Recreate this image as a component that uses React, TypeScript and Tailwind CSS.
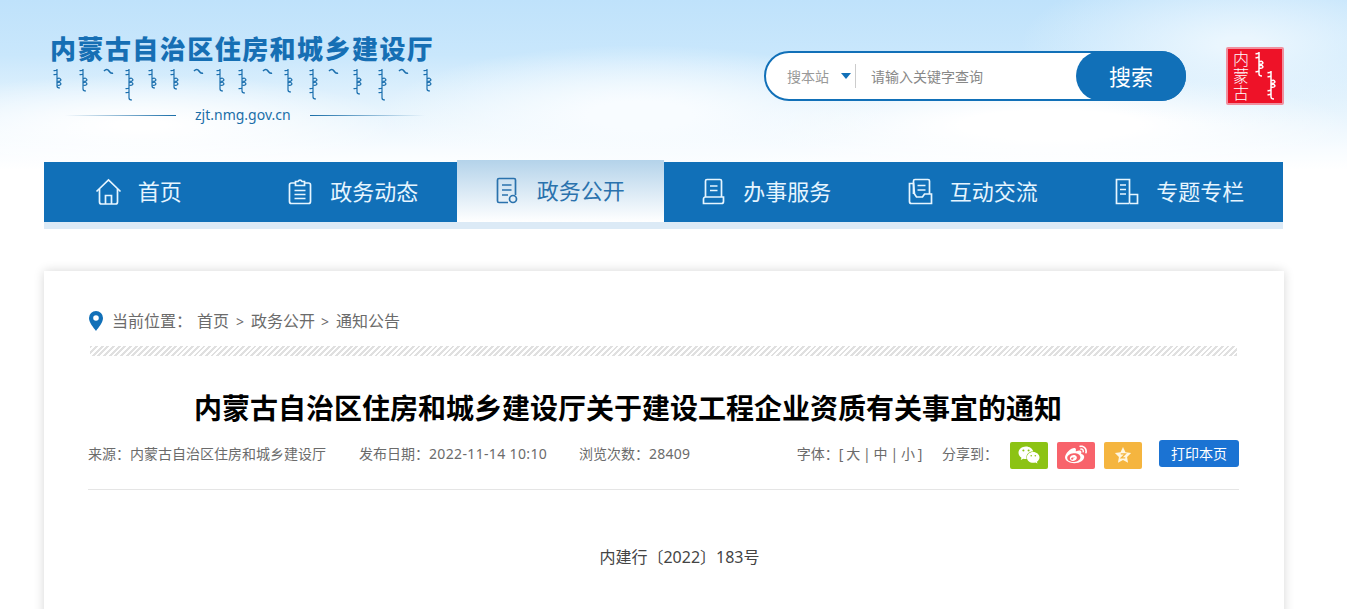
import { ReactNode } from 'react';
import { FaWeixin, FaWeibo } from 'react-icons/fa';

// [x, height] of each column of the script line under the site name
const scriptCols = [
  [7, 19], [33, 22], [58, 8], [79, 31], [102, 19], [124, 20], [148, 4], [170, 22], [192, 24],
  [217, 5], [238, 23], [263, 30], [283, 6], [307, 25], [332, 31], [353, 6], [377, 22],
];

function stemPath(x: number, y: number, h: number) {
  let d = `M${x} ${y}V${y + h - 2}q0 2 3 2`;
  let i = 1;
  while (i < h - 4) {
    if (i % 2 === 0) {
      d += `M${x} ${y + i}q3 -2 4 1q-1 2 -4 1`;
    } else {
      d += `M${x} ${y + i}q-2 1 -3.500 .5`;
    }
    i += 3 + (i % 3);
  }
  return d;
}

function ScriptLine() {
  return (
    <svg width="400" height="34" viewBox="0 0 400 34" className="block">
      {scriptCols.map(([x, h]) =>
        h < 10 ? (
          <path key={x} d={`M${x - 4} 3q3 -3 5 0t4 2`} fill="none" stroke="#1b6fae" strokeWidth="1.6" />
        ) : (
          <path key={x} d={stemPath(x, 1, h)} fill="none" stroke="#1b6fae" strokeWidth="1.2" />
        ),
      )}
    </svg>
  );
}

function Stamp() {
  return (
    <div className="flex h-[58px] w-[58px] items-center justify-between rounded-[2px] border-2 border-[#f0909f] bg-[#ee1228] pl-[3px] pr-[3px]">
      <span className="h-[54px] whitespace-nowrap text-center text-[16px] font-light leading-[18px] tracking-[1px] text-white [writing-mode:vertical-rl]">内蒙古</span>
      <svg width="28" height="50" viewBox="0 0 28 50">
        <path d={stemPath(8, 1, 24)} fill="none" stroke="#fff" strokeWidth="1.500" />
        <path d={stemPath(20, 20, 28)} fill="none" stroke="#fff" strokeWidth="1.500" />
      </svg>
    </div>
  );
}

const navIcon = 'fill-none stroke-current stroke-[1.7]';

function HomeIcon() {
  return (
    <svg width="27" height="27" viewBox="0 0 27 27" className={navIcon}>
      <path d="M1.5 13.5 13.500 2l12 11.500" />
      <path d="M4.500 11v13a2 2 0 0 0 2 2h14a2 2 0 0 0 2-2V11" />
      <path d="M10.500 26v-8.500h6V26" />
    </svg>
  );
}

function ClipboardIcon() {
  return (
    <svg width="27" height="27" viewBox="0 0 27 27" className={navIcon}>
      <path d="M8 5H4.500a2 2 0 0 0-2 2v16.500a2 2 0 0 0 2 2h17a2 2 0 0 0 2-2V7a2 2 0 0 0-2-2H18" />
      <path d="M8.500 7.500V3.500h2.500a2.200 2.200 0 0 1 4 0h2.500v4z" />
      <path d="M7.500 12.500h11M7.500 16.500h11M7.500 20.500h11" />
    </svg>
  );
}

function DocCircleIcon() {
  return (
    <svg width="27" height="27" viewBox="0 0 27 27" className={navIcon}>
      <path d="M14 25.500H5a1.500 1.500 0 0 1-1.500-1.500V3a1.500 1.500 0 0 1 1.500-1.500h15A1.500 1.500 0 0 1 21.500 3v15" />
      <path d="M8 8h9.500M8 13h9.500M8 18h6" />
      <circle cx="19" cy="22" r="3.500" />
    </svg>
  );
}

function ScrollIcon() {
  return (
    <svg width="27" height="27" viewBox="0 0 27 27" className={navIcon}>
      <path d="M5.500 19V3a1.500 1.500 0 0 1 1.500-1.500h13A1.500 1.500 0 0 1 21.500 3v16" />
      <path d="M10 8h7.500M10 12.500h7.500" />
      <path d="M3.500 25.500V21a2 2 0 0 1 2-2h18v4.500a2 2 0 0 1-2 2z" />
    </svg>
  );
}

function TrayIcon() {
  return (
    <svg width="27" height="27" viewBox="0 0 27 27" className={navIcon}>
      <path d="M6.500 16V3a1.500 1.500 0 0 1 1.500-1.500h13A1.500 1.500 0 0 1 22.500 3v13" />
      <path d="M10.500 7.500h8M10.500 12h8" />
      <path d="M6.500 5.500H2.500v18a2 2 0 0 0 2 2h20V16h-7l-2 3h-6l-2-3z" />
    </svg>
  );
}

function BuildingIcon() {
  return (
    <svg width="27" height="27" viewBox="0 0 27 27" className={navIcon}>
      <path d="M16.500 25.500H3.500V1.500h13V25.500" />
      <path d="M7 7h6M7 11.500h6M7 16h6" />
      <path d="M17 16.500h7.500v9H17" />
    </svg>
  );
}

const navItems: { label: string; icon: ReactNode; active?: boolean; textClass?: string }[] = [
  { label: '首页', icon: <HomeIcon />, textClass: 'w-[60px]' },
  { label: '政务动态', icon: <ClipboardIcon /> },
  { label: '政务公开', icon: <DocCircleIcon />, active: true },
  { label: '办事服务', icon: <ScrollIcon /> },
  { label: '互动交流', icon: <TrayIcon /> },
  { label: '专题专栏', icon: <BuildingIcon /> },
];

function Nav() {
  return (
    <nav className="border-b-[7px] border-[#dceaf6]">
      <div className="grid h-[60px] grid-cols-6 bg-[#1170b8]">
        {navItems.map((item) => (
          <a
            key={item.label}
            className={`flex items-center justify-center gap-[16px] pb-[2px] pr-[2px] text-[22px] ${
              item.active
                ? '-mt-[2px] bg-gradient-to-b from-[#b4d3ea] to-white text-[#2a72ad]'
                : 'text-[#e6f5ff]'
            }`}
          >
            {item.icon}
            <span className={item.textClass}>{item.label}</span>
          </a>
        ))}
      </div>
    </nav>
  );
}

function Search() {
  return (
    <div className="mt-[51px] flex h-[50px] w-[422px] shrink-0 items-center rounded-full border-2 border-[#1170b8] bg-white">
      <span className="ml-[21px] text-[14px] text-[#999]">搜本站</span>
      <span className="ml-[12px] h-0 w-0 border-x-[5px] border-t-[6px] border-x-transparent border-t-[#1170b8]" />
      <span className="ml-[4px] h-[24px] w-px bg-[#ccc]" />
      <span className="ml-[15px] flex-1 text-[14px] text-[#888]">请输入关键字查询</span>
      <button className="-mr-[2px] h-[50px] w-[110px] rounded-full bg-[#1170b8] text-[22px] text-white">搜索</button>
    </div>
  );
}

function StarIcon() {
  return (
    <svg width="18" height="18" viewBox="0 0 16 16">
      <path d="M8 .8l2.200 4.700 5 .7-3.600 3.600.9 5.100L8 12.500l-4.500 2.400.9-5.100L.8 6.200l5-.7z" fill="#fff6e0" />
      <path d="M6 7h4L6.500 10.500H10" fill="none" stroke="#f5b53f" strokeWidth="1.200" />
    </svg>
  );
}

export default function App() {
  return (
    <div className="h-[609px] overflow-hidden bg-white font-['Noto_Sans','Noto_Sans_CJK_SC',sans-serif]">
      <div className="h-[230px] bg-[radial-gradient(ellipse_260px_50px_at_140px_125px,#ffffff_10%,transparent_100%),radial-gradient(ellipse_260px_70px_at_640px_115px,#f8fcff_20%,transparent_100%),radial-gradient(ellipse_220px_80px_at_1240px_45px,#eaf6fe_10%,transparent_100%),radial-gradient(ellipse_300px_50px_at_1050px_125px,#ffffff_30%,transparent_100%),linear-gradient(to_bottom,#bfe2fb_0,#c9e7fc_55px,#e4f3fd_105px,#f8fcff_150px,#ffffff_170px)]">
        <div className="ml-[44px] w-[1239px]">
          <header className="flex h-[162px]">
            <div className="ml-[6px] w-[714px] shrink-0 pt-[33px]">
              <div className="text-[26px] font-black leading-[32px] tracking-[1.45px] text-[#166fb4]">内蒙古自治区住房和城乡建设厅</div>
              <div className="mt-[3px]">
                <ScriptLine />
              </div>
              <div className="mt-[3px] flex items-center text-[14px] leading-[20px] text-[#1a6ea8]">
                <span className="ml-[15px] h-px w-[111px] bg-gradient-to-r from-transparent to-[#1a6ea8]" />
                <span className="ml-[19px] w-[97px]">zjt.nmg.gov.cn</span>
                <span className="ml-[18px] h-px w-[115px] bg-gradient-to-l from-transparent to-[#1a6ea8]" />
              </div>
            </div>
            <Search />
            <div className="ml-[40px] mt-[47px] shrink-0">
              <Stamp />
            </div>
          </header>
          <Nav />
        </div>
      </div>

      <main className="ml-[44px] mt-[41px] h-[500px] w-[1240px] bg-white pl-[44px] pr-[45px] pt-[40px] shadow-[0_0_10px_rgba(0,0,0,0.16)]">
        <div className="flex h-[20px] items-center text-[16px] text-[#6b6b6b]">
          <svg width="14" height="20" viewBox="0 0 14 20" className="ml-px">
            <path fillRule="evenodd" d="M7 0a7 7 0 0 1 7 7c0 4.500-4.500 9.500-7 13C4.500 16.500 0 11.500 0 7a7 7 0 0 1 7-7zm0 4.200a2.800 2.800 0 1 0 0 5.600 2.800 2.800 0 0 0 0-5.600z" fill="#1170b8" />
          </svg>
          <span className="ml-[9px]">当前位置&#xFF1A;</span>
          <span className="ml-[5px]">首页</span>
          <span className="mx-[7px] text-[14px]">&gt;</span>
          <span>政务公开</span>
          <span className="ml-[6px] mr-[7px] text-[14px]">&gt;</span>
          <span>通知公告</span>
        </div>
        <div className="ml-[2px] mt-[15px] h-[10px] w-[1147px] bg-[repeating-linear-gradient(135deg,#e0e0e0_0,#e0e0e0_2px,#ffffff_2px,#ffffff_4px)]" />
        <h1 className="mt-[32px] pr-[71px] text-center text-[28px] font-bold leading-[40px] text-black">
          内蒙古自治区住房和城乡建设厅关于建设工程企业资质有关事宜的通知
        </h1>
        <div className="mt-[12px] flex h-[30px] items-center text-[14px] text-[#6b6b6b]">
          <span className="mb-[3px]">来源&#xFF1A;内蒙古自治区住房和城乡建设厅</span>
          <span className="mb-[3px] ml-[33px]">发布日期&#xFF1A;<span className="tracking-[0.35px]">2022-11-14 10:10</span></span>
          <span className="mb-[3px] ml-[32px]">浏览次数&#xFF1A;<span className="tracking-[0.2px]">28409</span></span>
          <span className="mb-[3px] ml-auto">字体&#xFF1A;<span className="tracking-[-0.4px]">[ 大 | 中 | 小 ]</span></span>
          <span className="mb-[3px] ml-[20px]">分享到&#xFF1A;</span>
          <div className="ml-[6px] flex gap-[9px] pl-[6px]">
            <a className="flex h-[27px] w-[38px] items-center justify-center rounded-[2px] bg-[#8cc314] text-[22px] text-white">
              <FaWeixin />
            </a>
            <a className="flex h-[27px] w-[38px] items-center justify-center rounded-[2px] bg-[#f8636b] text-[22px] text-white">
              <FaWeibo />
            </a>
            <a className="flex h-[27px] w-[38px] items-center justify-center rounded-[2px] bg-[#f5b53f]">
              <StarIcon />
            </a>
          </div>
          <button className="-mt-[3px] ml-[17px] h-[27px] w-[80px] rounded-[3px] bg-[#1b73d3] text-[14px] text-white">打印本页</button>
        </div>
        <div className="mt-[19px] h-px bg-[#e5e5e5]" />
        <p className="mt-[55px] text-center indent-[32px] text-[16px] leading-[24px] text-[#444]">内建行〔2022〕183号</p>
      </main>
    </div>
  );
}
